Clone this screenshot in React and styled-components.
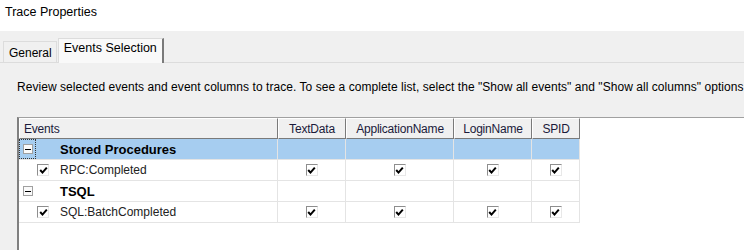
import React from 'react';
import styled, { createGlobalStyle } from 'styled-components';

const GlobalStyle = createGlobalStyle`
  html, body { margin: 0; padding: 0; background: #ffffff; }
  body {
    width: 744px;
    height: 250px;
    overflow: hidden;
    font-family: "Liberation Sans", Arial, sans-serif;
    font-size: 12px;
    color: #000;
  }
`;

const columns = [
  { id: 'textdata', label: 'TextData', width: 68 },
  { id: 'app', label: 'ApplicationName', width: 108 },
  { id: 'login', label: 'LoginName', width: 78 },
  { id: 'spid', label: 'SPID', width: 48 },
];

const rows = [
  { id: 1, kind: 'group', label: 'Stored Procedures', selected: true },
  { id: 2, kind: 'event', label: 'RPC:Completed' },
  { id: 3, kind: 'group', label: 'TSQL' },
  { id: 4, kind: 'event', label: 'SQL:BatchCompleted' },
];

const App = () => {
  return (
    <>
      <GlobalStyle />
      <Window>
        <TitleBar>Trace Properties</TitleBar>
        <Body>
          <TabStrip>
            <Tab>General</Tab>
            <Tab active>Events Selection</Tab>
          </TabStrip>
          <Panel>
            <Hint>
              Review selected events and event columns to trace. To see a complete list, select the "Show all events" and "Show all columns" options
            </Hint>
            <Grid>
              <HeaderRow>
                <HeadCell width={259} align="left">Events</HeadCell>
                {columns.map(col => (
                  <HeadCell key={col.id} width={col.width}>{col.label}</HeadCell>
                ))}
              </HeaderRow>
              {rows.map(row => (
                <Row key={row.id} selected={row.selected}>
                  <NameCell>
                    <Gutter focused={row.selected}>
                      {row.kind === 'group' && <Expander />}
                    </Gutter>
                    <CheckSlot>
                      {row.kind === 'event' && <Check />}
                    </CheckSlot>
                    <Label bold={row.kind === 'group'}>{row.label}</Label>
                  </NameCell>
                  {columns.map(col => (
                    <Cell key={col.id} width={col.width}>
                      {row.kind === 'event' && <Check />}
                    </Cell>
                  ))}
                </Row>
              ))}
            </Grid>
          </Panel>
        </Body>
      </Window>
    </>
  );
};

/* Checkbox drawn like the classic win32 grid check */
const Check = () => (
  <CheckBox>
    <svg width="9" height="9" viewBox="0 0 9 9">
      <path d="M1.2 4 L3.5 6.6 L7.8 1.6" fill="none" stroke="#000" strokeWidth="2" />
    </svg>
  </CheckBox>
);

const Window = styled.div`
  display: flex;
  flex-direction: column;
  height: 250px;
`;

const TitleBar = styled.div`
  height: 31px;
  padding: 5px 0 0 5px;
  box-sizing: border-box;
  font-size: 12.5px;
  background: #ffffff;
`;

const Body = styled.div`
  flex: 1;
  background: #f0f0f0;
  display: flex;
  flex-direction: column;
`;

const TabStrip = styled.div`
  display: flex;
  align-items: flex-end;
  height: 31px;
  padding-left: 3px;
  box-sizing: border-box;
`;

const Tab = styled.div`
  box-sizing: border-box;
  height: ${p => (p.active ? '25px' : '21px')};
  padding: ${p => (p.active ? '2px 5px 0 5px' : '4px 4px 0 5px')};
  margin-left: ${p => (p.active ? '1px' : '0')};
  margin-bottom: ${p => (p.active ? '-1px' : '0')};
  font-size: ${p => (p.active ? '12.5px' : '12px')};
  background: ${p => (p.active ? '#f9f9f9' : '#f0f0f0')};
  border: 1px solid #dcdcdc;
  border-bottom: none;
  border-right: ${p => (p.active ? '2px solid #7a7a7a' : '1px solid #dcdcdc')};
  position: relative;
  z-index: ${p => (p.active ? 1 : 0)};
`;

const Panel = styled.div`
  flex: 1;
  border-top: 1px solid #dcdcdc;
  background: #f0f0f0;
  padding: 17px 0 0 17px;
  display: flex;
  flex-direction: column;
  overflow: hidden;
`;

const Hint = styled.div`
  white-space: nowrap;
  font-size: 12px;
  letter-spacing: 0.05px;
  height: 37px;
`;

const Grid = styled.div`
  flex: 1;
  background: #ffffff;
  border-left: 2px solid #808080;
  border-top: 1px solid #a0a0a0;
`;

const HeaderRow = styled.div`
  display: flex;
  height: 21px;
`;

const HeadCell = styled.div`
  box-sizing: border-box;
  width: ${p => p.width}px;
  height: 21px;
  background: #f0f0f0;
  border-top: 1px solid #ffffff;
  border-left: 1px solid #ffffff;
  border-right: 1px solid #7a7a7a;
  border-bottom: 1px solid #7a7a7a;
  padding: 3px 4px 0;
  text-align: ${p => p.align || 'center'};
  font-size: 12px;
  color: #1a1a3a;
  white-space: nowrap;
  letter-spacing: -0.2px;
`;

const Row = styled.div`
  display: flex;
  width: fit-content;
  height: 21px;
  background: ${p => (p.selected ? '#a6cdf0' : '#ffffff')};
`;

const NameCell = styled.div`
  box-sizing: border-box;
  width: 259px;
  display: flex;
  align-items: center;
  border-right: 1px solid #e4e4e4;
  border-bottom: 1px solid #e4e4e4;
`;

const Gutter = styled.div`
  box-sizing: border-box;
  width: 17px;
  height: 100%;
  display: flex;
  align-items: center;
  justify-content: center;
  border: ${p => (p.focused ? '1px dotted #333' : '1px solid transparent')};
`;

/* the small boxed minus used by the tree expander */
const Expander = styled.span`
  box-sizing: border-box;
  width: 10px;
  height: 10px;
  border: 1px solid #a0a0a0;
  background: #fafafa;
  display: flex;
  align-items: center;
  justify-content: center;

  &::after {
    content: '';
    width: 6px;
    height: 1px;
    background: #000;
  }
`;

const CheckSlot = styled.div`
  width: 12px;
  display: flex;
  justify-content: center;
  margin-left: 1px;
`;

const CheckBox = styled.span`
  box-sizing: border-box;
  width: 12px;
  height: 12px;
  display: inline-flex;
  align-items: center;
  justify-content: center;
  border: 1px solid #8e8e8e;
  border-right-color: #e8e8e8;
  border-bottom-color: #e8e8e8;
  background: #ffffff;
`;

const Label = styled.span`
  margin-left: 11px;
  font-size: ${p => (p.bold ? '13px' : '12px')};
  font-weight: ${p => (p.bold ? 'bold' : 'normal')};
  color: ${p => (p.bold ? '#000' : '#222')};
  white-space: nowrap;
`;

const Cell = styled.div`
  box-sizing: border-box;
  width: ${p => p.width}px;
  display: flex;
  align-items: center;
  justify-content: center;
  border-right: 1px solid #e4e4e4;
  border-bottom: 1px solid #e4e4e4;
`;

export default App;
